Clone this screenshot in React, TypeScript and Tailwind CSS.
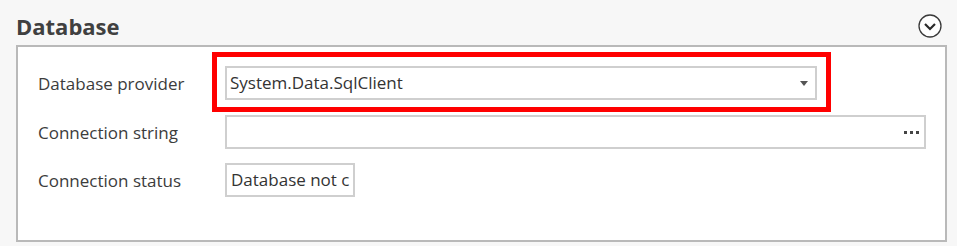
import React from 'react'

const font = { fontFamily: '"Open Sans", "Noto Sans", sans-serif' }

function ChevronCircle() {
  return (
    <svg width="24" height="24" viewBox="0 0 24 24" className="block">
      <circle cx="12" cy="12" r="11" fill="#fff" stroke="#3a3a3a" strokeWidth="1.3" />
      <path d="M7 10 L12 15 L17 10" fill="none" stroke="#2a2a2a" strokeWidth="2.2" />
    </svg>
  )
}

function Row({ label, children }: { label: string; children: React.ReactNode }) {
  return (
    <div className="flex items-center h-[34px]">
      <div className="w-[187px] shrink-0 text-[17px] text-[#3c3c3c] leading-none">{label}</div>
      {children}
    </div>
  )
}

export default function App() {
  return (
    <div className="w-[957px] h-[246px] bg-[#f7f7f7] pl-4 pr-[10px] pt-[6px]" style={font}>
      <div className="flex items-center justify-between h-[39px]">
        <h1 className="text-[22px] font-bold text-[#404040] leading-none">Database</h1>
        <div className="mr-[5px]">
          <ChevronCircle />
        </div>
      </div>
      <div className="relative h-[197px] border-2 border-[#b9b9b9] bg-white pl-[20px] pt-[19px]">
        <div className="absolute left-[194px] top-[5px] w-[619px] h-[60px] border-[5px] border-[#ff0000]" />
        <Row label="Database provider">
          <div className="flex items-center w-[592px] h-[34px] border-2 border-[#cfcfcf] pl-[3px] pr-[7px] text-[17px] text-[#333]">
            <span className="flex-1">System.Data.SqlClient</span>
            <span className="w-0 h-0 border-l-[4px] border-r-[4px] border-t-[5px] border-l-transparent border-r-transparent border-t-[#555]" />
          </div>
        </Row>
        <div className="mt-[15px]">
          <Row label="Connection string">
            <div className="flex items-center justify-end w-[701px] h-[34px] border-2 border-[#cfcfcf] pr-[5px]">
              <div className="flex gap-[3px]">
                <span className="w-[3px] h-[3px] bg-[#444]" />
                <span className="w-[3px] h-[3px] bg-[#444]" />
                <span className="w-[3px] h-[3px] bg-[#444]" />
              </div>
            </div>
          </Row>
        </div>
        <div className="mt-[14px]">
          <Row label="Connection status">
            <div className="flex items-center w-[130px] h-[34px] border-2 border-[#cfcfcf] pl-[4px] whitespace-nowrap text-[17px] text-[#333]">
              Database not c
            </div>
          </Row>
        </div>
      </div>
    </div>
  )
}
